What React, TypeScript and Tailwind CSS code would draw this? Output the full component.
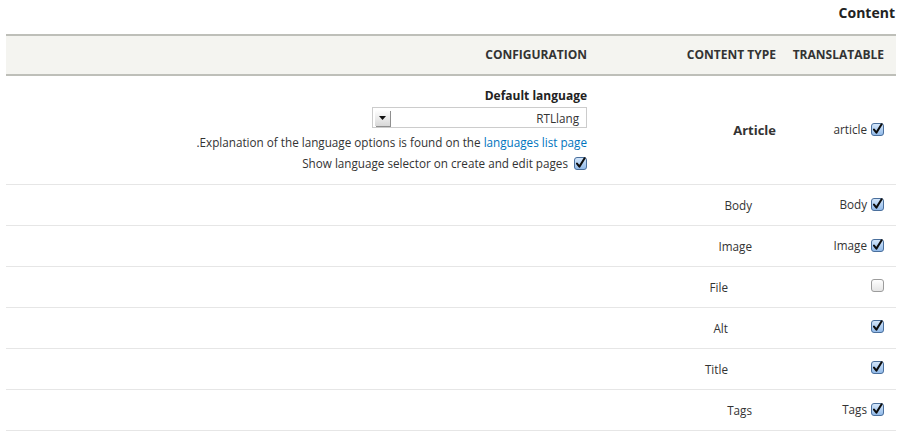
import React from 'react';

type Row = {
  label: string;
  level: 0 | 1 | 2;
  translatable: string;
  checked: boolean;
};

const rows: Row[] = [
  { label: 'Body', level: 1, translatable: 'Body', checked: true },
  { label: 'Image', level: 1, translatable: 'Image', checked: true },
  { label: 'File', level: 2, translatable: '', checked: false },
  { label: 'Alt', level: 2, translatable: '', checked: true },
  { label: 'Title', level: 2, translatable: '', checked: true },
  { label: 'Tags', level: 1, translatable: 'Tags', checked: true },
];

function Checkbox({ checked }: { checked: boolean }) {
  if (!checked) {
    return (
      <svg width="13" height="13" viewBox="0 0 13 13" className="inline-block shrink-0">
        <defs>
          <linearGradient id="off" x1="0" y1="0" x2="0" y2="1">
            <stop offset="0" stopColor="#ffffff" />
            <stop offset="1" stopColor="#e4e4e4" />
          </linearGradient>
        </defs>
        <rect x="0.5" y="0.5" width="12" height="12" rx="2.5" fill="url(#off)" stroke="#9c9c9c" />
      </svg>
    );
  }
  return (
    <svg width="13" height="13" viewBox="0 0 13 13" className="inline-block shrink-0">
      <defs>
        <linearGradient id="on" x1="0" y1="0" x2="0" y2="1">
          <stop offset="0" stopColor="#d6e8fb" />
          <stop offset="1" stopColor="#8fb8e8" />
        </linearGradient>
      </defs>
      <rect x="0.5" y="0.5" width="12" height="12" rx="2.5" fill="url(#on)" stroke="#4a6f9c" />
      <path d="M3 6.6 L5.4 9.6 L10.6 1.2" fill="none" stroke="#0d0d0d" strokeWidth="2" strokeLinecap="round" strokeLinejoin="round" />
    </svg>
  );
}

function Translatable({ text, checked }: { text: string; checked: boolean }) {
  return (
    <span className="inline-flex items-center gap-[4px]">
      <Checkbox checked={checked} />
      {text && <span>{text}</span>}
    </span>
  );
}

export default function App() {
  return (
    <div
      dir="rtl"
      className="min-h-screen bg-white text-[#333] text-[11.7px] leading-[16px]"
      style={{ fontFamily: '"Open Sans", "Noto Sans", sans-serif' }}
    >
      <div className="pl-[6px] pr-[16px]">
        <div className="h-[34px] pt-[5px] pr-[1px] text-[14px] font-bold text-[#222]">Content</div>
        <table className="w-full table-fixed border-collapse">
          <colgroup>
            <col className="w-[108px]" />
            <col className="w-[189px]" />
            <col />
          </colgroup>
          <thead>
            <tr className="bg-[#f4f4f0] border-t-2 border-b-2 border-[#bebfb9] text-[12px]">
              <th className="h-[40px] px-[12px] text-right font-bold uppercase">Translatable</th>
              <th className="px-[12px] text-right font-bold uppercase">Content type</th>
              <th className="px-[12px] text-right font-bold uppercase">Configuration</th>
            </tr>
          </thead>
          <tbody>
            <tr className="border-b border-[#e6e6e6]">
              <td className="px-[12px] text-right align-middle">
                <Translatable text="article" checked />
              </td>
              <td className="px-[12px] text-right align-middle font-bold text-[13px]">Article</td>
              <td className="px-[12px] pt-[12px] pb-[13px] align-top">
                <div className="flex flex-col items-start">
                  <div className="font-bold text-[12px] text-[#222]">Default language</div>
                  <div className="mt-[3px] flex h-[21px] w-[215px] items-center justify-between border border-[#cccccc] bg-white pr-[7px]">
                    <span>RTLlang</span>
                    <span className="ml-[2px] flex h-[16px] w-[15px] items-center justify-center bg-gradient-to-b from-[#ffffff] to-[#d8d8d8] shadow-[1px_1px_0_#8f8f8f]">
                      <svg width="7" height="4" viewBox="0 0 7 4">
                        <path d="M0 0 L7 0 L3.5 4 Z" fill="#111" />
                      </svg>
                    </span>
                  </div>
                  <div className="mt-[6px]">
                    Explanation of the language options is found on the{' '}
                    <a className="text-[#0074bd]" href="#">languages list page</a>.
                  </div>
                  <div className="mt-[5px] flex items-center gap-[6px]">
                    <Checkbox checked />
                    <span>Show language selector on create and edit pages</span>
                  </div>
                </div>
              </td>
            </tr>
            {rows.map((r) => (
              <tr key={r.label} className="border-b border-[#e6e6e6]">
                <td className="h-[41px] px-[12px] text-right align-middle">
                  <Translatable text={r.translatable} checked={r.checked} />
                </td>
                <td
                  className={
                    r.level === 1
                      ? 'px-[12px] pr-[36px] text-right align-middle'
                      : 'px-[12px] pr-[60px] text-right align-middle'
                  }
                >
                  {r.label}
                </td>
                <td className="px-[12px]" />
              </tr>
            ))}
          </tbody>
        </table>
      </div>
    </div>
  );
}
